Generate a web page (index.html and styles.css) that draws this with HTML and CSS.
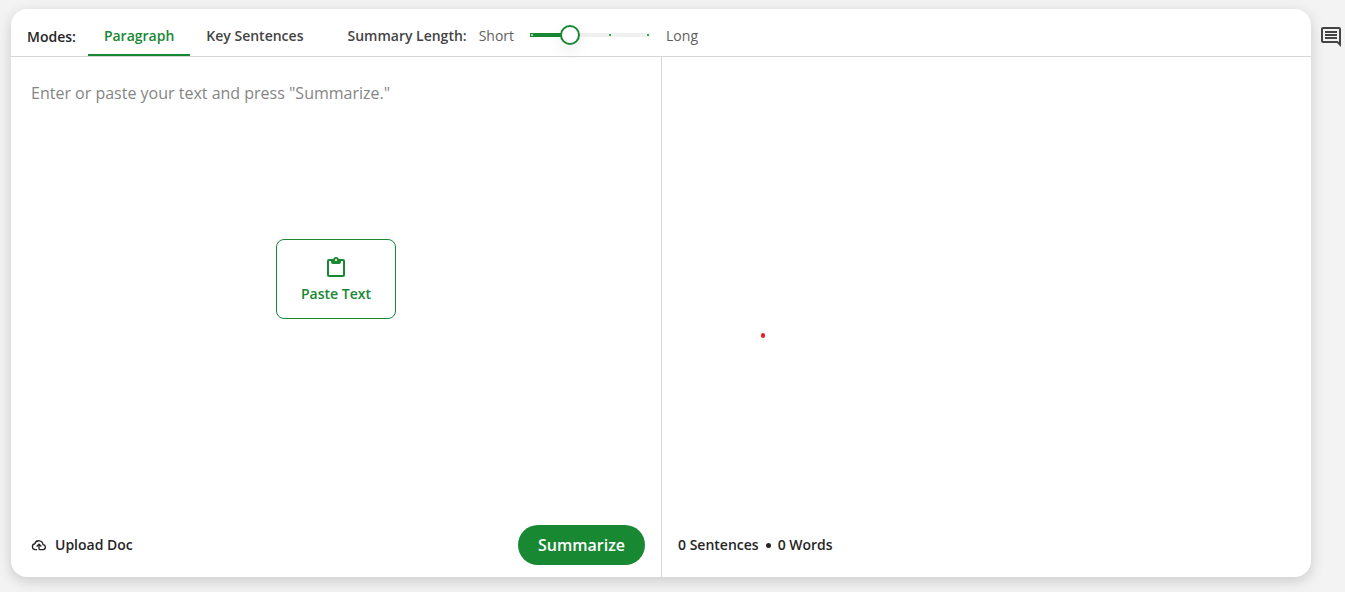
FILE: index.html
```html
<!DOCTYPE html>
<html lang="en">
<head>
<meta charset="utf-8">
<title>Summarizer</title>
<link rel="stylesheet" href="styles.css">
</head>
<body>
<div class="page">
  <main class="card">
    <header class="toolbar">
      <span class="modes-label">Modes:</span>
      <nav class="tabs" aria-label="Modes">
        <button class="tab tab-active" type="button">Paragraph</button>
        <button class="tab" type="button">Key Sentences</button>
      </nav>
      <div class="length">
        <label class="length-label" for="length">Summary Length:</label>
        <span class="length-end">Short</span>
        <input class="slider" id="length" type="range" min="0" max="3" step="1" value="1">
        <span class="length-end">Long</span>
      </div>
    </header>
    <div class="panes">
      <section class="pane input-pane">
        <textarea class="editor" aria-label="Text to summarize" placeholder="Enter or paste your text and press &quot;Summarize.&quot;"></textarea>
        <button class="paste" type="button">
          <svg width="24" height="24" viewBox="0 0 24 24" fill="currentColor" aria-hidden="true"><path d="M19 3h-4.180C14.400 1.840 13.300 1 12 1c-1.300 0-2.400.84-2.820 2H5c-1.100 0-2 .9-2 2v14c0 1.100.9 2 2 2h14c1.100 0 2-.9 2-2V5c0-1.100-.9-2-2-2zm-7 0c.55 0 1 .45 1 1s-.45 1-1 1-1-.45-1-1 .45-1 1-1zm7 16H5V5h2v1c0 1.100.9 2 2 2h6c1.100 0 2-.9 2-2V5h2v14z"/></svg>
          <span>Paste Text</span>
        </button>
        <footer class="pane-footer">
          <button class="upload" type="button">
            <svg width="16" height="16" viewBox="0 0 24 24" fill="none" stroke="currentColor" stroke-width="2" aria-hidden="true"><path d="M9 19H6.500A4.500 4.500 0 0 1 5.700 10.100A6.300 6.300 0 0 1 18 11.500A3.800 3.800 0 0 1 18.500 19H13.500a1.500 1.500 0 0 1-1.500-1.500V11M8.500 14.200L12 10.700L15.500 14.200"/></svg>
            <span>Upload Doc</span>
          </button>
          <button class="summarize" type="button">Summarize</button>
        </footer>
      </section>
      <section class="pane output-pane">
        <span class="pointer"></span>
        <footer class="pane-footer counts">
          <span>0 Sentences</span><span class="bullet"></span><span>0 Words</span>
        </footer>
      </section>
    </div>
  </main>
  <aside class="rail">
    <button class="feedback" type="button" aria-label="Feedback">
      <svg width="24" height="24" viewBox="0 0 24 24" fill="currentColor" aria-hidden="true"><path d="M21.990 4c0-1.100-.89-2-1.990-2H4c-1.100 0-2 .9-2 2v12c0 1.100.9 2 2 2h14l4 4-.01-18zM20 4v13.170L18.830 16H4V4h16zM6 12h12v2H6zm0-3h12v2H6zm0-3h12v2H6z"/></svg>
    </button>
  </aside>
</div>
</body>
</html>
```
FILE: styles.css
```css
* {
  box-sizing: border-box;
}

body {
  margin: 0;
  background: #f3f3f3;
  color: #252525;
  font: 600 14px/20px "Open Sans", sans-serif;
}

button {
  margin: 0;
  padding: 0;
  border: 0;
  background: none;
  color: inherit;
  font: inherit;
  cursor: pointer;
}

svg {
  display: block;
}

.page {
  display: flex;
  min-height: 100vh;
  padding: 9px 0 15px 11px;
}

.card {
  display: flex;
  flex: 1;
  flex-direction: column;
  border-radius: 16px;
  background: #fff;
  box-shadow: 0 4px 14px rgba(0, 0, 0, 0.17);
}

.toolbar {
  display: flex;
  align-items: stretch;
  height: 48px;
  padding-left: 16px;
  border-bottom: 1px solid #d6d6d6;
}

.modes-label {
  margin-right: 12px;
  padding-top: 18px;
}

.tabs {
  display: flex;
}

.tab {
  padding: 8px 16px 0;
  border-bottom: 2px solid transparent;
  color: #444;
}

.tab-active {
  border-color: #188832;
  color: #188832;
}

.length {
  display: flex;
  align-items: center;
  margin-left: 28px;
  padding-top: 6px;
  color: #444;
}

.length-label {
  margin-right: 12px;
}

.length-end {
  color: #5f5f5f;
  font-weight: 400;
}

.slider {
  width: 140px;
  height: 20px;
  margin: 0 6px 2px;
  appearance: none;
  background: none;
}

.slider::-webkit-slider-runnable-track {
  height: 4px;
  background:
    linear-gradient(#a9d4b2, #a9d4b2) 11px 1px / 2px 2px no-repeat,
    linear-gradient(#43a058, #43a058) 89px 1px / 2px 2px no-repeat,
    linear-gradient(#43a058, #43a058) 127px 1px / 2px 2px no-repeat,
    linear-gradient(#188832, #188832) 10px 0 / 40px 4px no-repeat,
    linear-gradient(#f0f0f0, #f0f0f0) 50px 0 / 80px 4px no-repeat;
}

.slider::-webkit-slider-thumb {
  width: 20px;
  height: 20px;
  margin-top: -8px;
  appearance: none;
  border: 2px solid #188832;
  border-radius: 50%;
  background: #fff;
  box-shadow: 0 6px 16px rgba(0, 0, 0, 0.08);
}

.panes {
  display: grid;
  flex: 1;
  grid-template-columns: 1fr 1fr;
}

.pane {
  position: relative;
  display: flex;
  flex-direction: column;
}

.output-pane {
  border-left: 1px solid #d6d6d6;
}

.editor {
  flex: 1;
  width: 100%;
  padding: 24px 20px;
  border: 0;
  outline: 0;
  background: none;
  resize: none;
  font: 400 16px/24px "Open Sans", sans-serif;
}

.editor::placeholder {
  color: #858585;
}

.paste {
  position: absolute;
  top: 182px;
  left: calc(50% - 60px);
  display: flex;
  flex-direction: column;
  align-items: center;
  gap: 4px;
  width: 120px;
  height: 80px;
  padding: 16px 0 14px;
  border: 1px solid #188832;
  border-radius: 8px;
  color: #188832;
}

.pane-footer {
  display: flex;
  align-items: center;
  justify-content: space-between;
  height: 64px;
  padding: 0 16px 0 20px;
}

.upload {
  display: flex;
  align-items: center;
  gap: 8px;
}

.summarize {
  height: 40px;
  padding: 0 20px;
  border-radius: 20px;
  background: #188832;
  color: #fff;
  font-size: 16px;
  font-weight: 600;
}

.counts {
  justify-content: flex-start;
  gap: 7px;
  margin-top: auto;
  padding-left: 16px;
}

.bullet {
  width: 5px;
  height: 5px;
  border-radius: 50%;
  background: #252525;
}

.pointer {
  position: absolute;
  top: 276px;
  left: 99px;
  width: 4px;
  height: 5px;
  border-radius: 2px;
  background: #ed1c24;
}

.rail {
  width: 34px;
  padding: 16px 0 0 8px;
}

.feedback {
  color: #444;
}
```
